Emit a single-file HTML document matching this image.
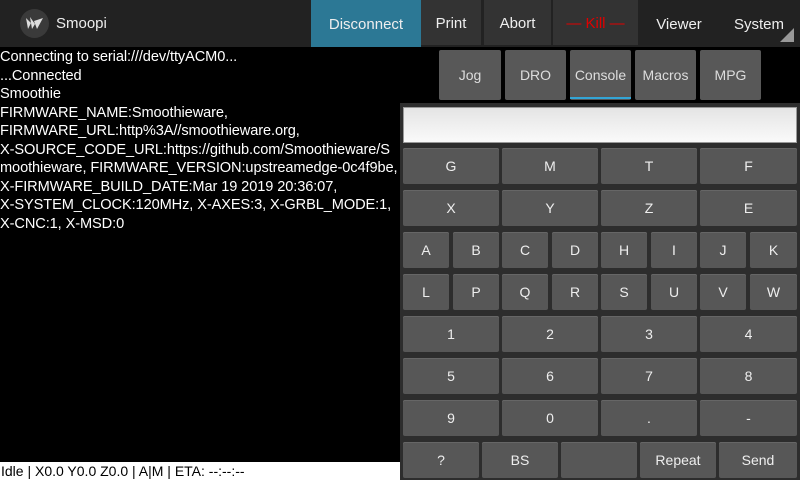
<!DOCTYPE html>
<html><head><meta charset="utf-8"><style>
*{margin:0;padding:0;box-sizing:border-box}
body{width:800px;height:480px;background:#000;position:relative;overflow:hidden;font-family:"Liberation Sans",sans-serif;color:#fff}
.a{position:absolute}
.bar{left:0;top:0;width:800px;height:47px;background:#222}
.tb{position:absolute;top:0;height:47px;display:flex;align-items:center;justify-content:center;font-size:15px;color:#eee;padding-top:2px}
.tab{position:absolute;top:50px;height:50px;background:#585858;display:flex;align-items:center;justify-content:center;font-size:14px;color:#ddd;border-radius:2px}
.k{position:absolute;background:#575757;border-radius:2px;display:flex;align-items:center;justify-content:center;font-size:14px;color:#eee;box-shadow:inset 0 1px 0 #666}
.con{left:0;top:48px;font-size:14.6px;line-height:18.5px;white-space:nowrap;letter-spacing:-0.1px}
</style></head><body>
<div class="a bar"></div>
<div class="a" style="left:20px;top:9px;width:29px;height:29px;border-radius:50%;background:#3a3a3a"></div>
<svg class="a" style="left:25px;top:15px" width="20" height="17" viewBox="0 0 20 17"><path d="M1 3 L6 8 L3 14 Z M5 2 L10 9 L7 14 Z M9 6 L18 3 L12 14 Z" fill="#ddd"/></svg>
<div class="a" style="left:56px;top:15px;font-size:15px;color:#eee">Smoopi</div>
<div class="tb" style="left:311px;width:110px;background:#2c7895">Disconnect</div>
<div class="tb" style="left:421px;width:60px;background:#333;height:45px">Print</div>
<div class="tb" style="left:484px;width:67px;background:#333;height:45px">Abort</div>
<div class="tb" style="left:553px;width:85px;background:#333;height:45px;color:#e00000">— Kill —</div>
<div class="tb" style="left:644px;width:70px">Viewer</div>
<div class="tb" style="left:726px;width:66px">System</div>
<svg class="a" style="left:780px;top:28px" width="14" height="14"><path d="M14 0 L14 14 L0 14 Z" fill="#999"/></svg>

<div class="tab" style="left:439px;width:62px">Jog</div>
<div class="tab" style="left:505px;width:61px">DRO</div>
<div class="tab" style="left:570px;width:61px">Console</div>
<div class="a" style="left:570px;top:97px;width:61px;height:2px;background:#33a5d6"></div>
<div class="tab" style="left:635px;width:61px">Macros</div>
<div class="tab" style="left:700px;width:61px">MPG</div>

<div class="a con">Connecting to serial:///dev/ttyACM0...<br>...Connected<br>Smoothie<br>FIRMWARE_NAME:Smoothieware,<br>FIRMWARE_URL:http%3A//smoothieware.org,<br>X-SOURCE_CODE_URL:https://github.com/Smoothieware/S<br>moothieware, FIRMWARE_VERSION:upstreamedge-0c4f9be,<br>X-FIRMWARE_BUILD_DATE:Mar 19 2019 20:36:07,<br>X-SYSTEM_CLOCK:120MHz, X-AXES:3, X-GRBL_MODE:1,<br>X-CNC:1, X-MSD:0</div>

<div class="a" style="left:0;top:462px;width:400px;height:18px;background:#fff;color:#000;font-size:14px;line-height:18px;padding-left:1px;white-space:nowrap">Idle | X0.0 Y0.0 Z0.0 | A|M | ETA: --:--:--</div>

<div class="a" style="left:400px;top:103px;width:400px;height:377px;background:#2d2d2d"></div>
<div class="a" style="left:403px;top:107px;width:394px;height:36px;background:linear-gradient(#e4e4e4,#fafafa);border:1px solid #999"></div>

<div class="k" style="left:403px;top:148px;width:96px;height:36px">G</div>
<div class="k" style="left:502px;top:148px;width:96px;height:36px">M</div>
<div class="k" style="left:601px;top:148px;width:96px;height:36px">T</div>
<div class="k" style="left:700px;top:148px;width:97px;height:36px">F</div>
<div class="k" style="left:403px;top:190px;width:96px;height:36px">X</div>
<div class="k" style="left:502px;top:190px;width:96px;height:36px">Y</div>
<div class="k" style="left:601px;top:190px;width:96px;height:36px">Z</div>
<div class="k" style="left:700px;top:190px;width:97px;height:36px">E</div>

<div class="k" style="left:403px;top:232px;width:46px;height:36px">A</div>
<div class="k" style="left:453px;top:232px;width:46px;height:36px">B</div>
<div class="k" style="left:502px;top:232px;width:46px;height:36px">C</div>
<div class="k" style="left:552px;top:232px;width:46px;height:36px">D</div>
<div class="k" style="left:601px;top:232px;width:46px;height:36px">H</div>
<div class="k" style="left:651px;top:232px;width:46px;height:36px">I</div>
<div class="k" style="left:700px;top:232px;width:46px;height:36px">J</div>
<div class="k" style="left:750px;top:232px;width:47px;height:36px">K</div>
<div class="k" style="left:403px;top:274px;width:46px;height:36px">L</div>
<div class="k" style="left:453px;top:274px;width:46px;height:36px">P</div>
<div class="k" style="left:502px;top:274px;width:46px;height:36px">Q</div>
<div class="k" style="left:552px;top:274px;width:46px;height:36px">R</div>
<div class="k" style="left:601px;top:274px;width:46px;height:36px">S</div>
<div class="k" style="left:651px;top:274px;width:46px;height:36px">U</div>
<div class="k" style="left:700px;top:274px;width:46px;height:36px">V</div>
<div class="k" style="left:750px;top:274px;width:47px;height:36px">W</div>

<div class="k" style="left:403px;top:316px;width:96px;height:36px">1</div>
<div class="k" style="left:502px;top:316px;width:96px;height:36px">2</div>
<div class="k" style="left:601px;top:316px;width:96px;height:36px">3</div>
<div class="k" style="left:700px;top:316px;width:97px;height:36px">4</div>
<div class="k" style="left:403px;top:358px;width:96px;height:36px">5</div>
<div class="k" style="left:502px;top:358px;width:96px;height:36px">6</div>
<div class="k" style="left:601px;top:358px;width:96px;height:36px">7</div>
<div class="k" style="left:700px;top:358px;width:97px;height:36px">8</div>
<div class="k" style="left:403px;top:400px;width:96px;height:36px">9</div>
<div class="k" style="left:502px;top:400px;width:96px;height:36px">0</div>
<div class="k" style="left:601px;top:400px;width:96px;height:36px">.</div>
<div class="k" style="left:700px;top:400px;width:97px;height:36px">-</div>

<div class="k" style="left:403px;top:442px;width:76px;height:36px">?</div>
<div class="k" style="left:482px;top:442px;width:76px;height:36px">BS</div>
<div class="k" style="left:561px;top:442px;width:76px;height:36px"></div>
<div class="k" style="left:640px;top:442px;width:76px;height:36px">Repeat</div>
<div class="k" style="left:719px;top:442px;width:78px;height:36px">Send</div>
</body></html>
